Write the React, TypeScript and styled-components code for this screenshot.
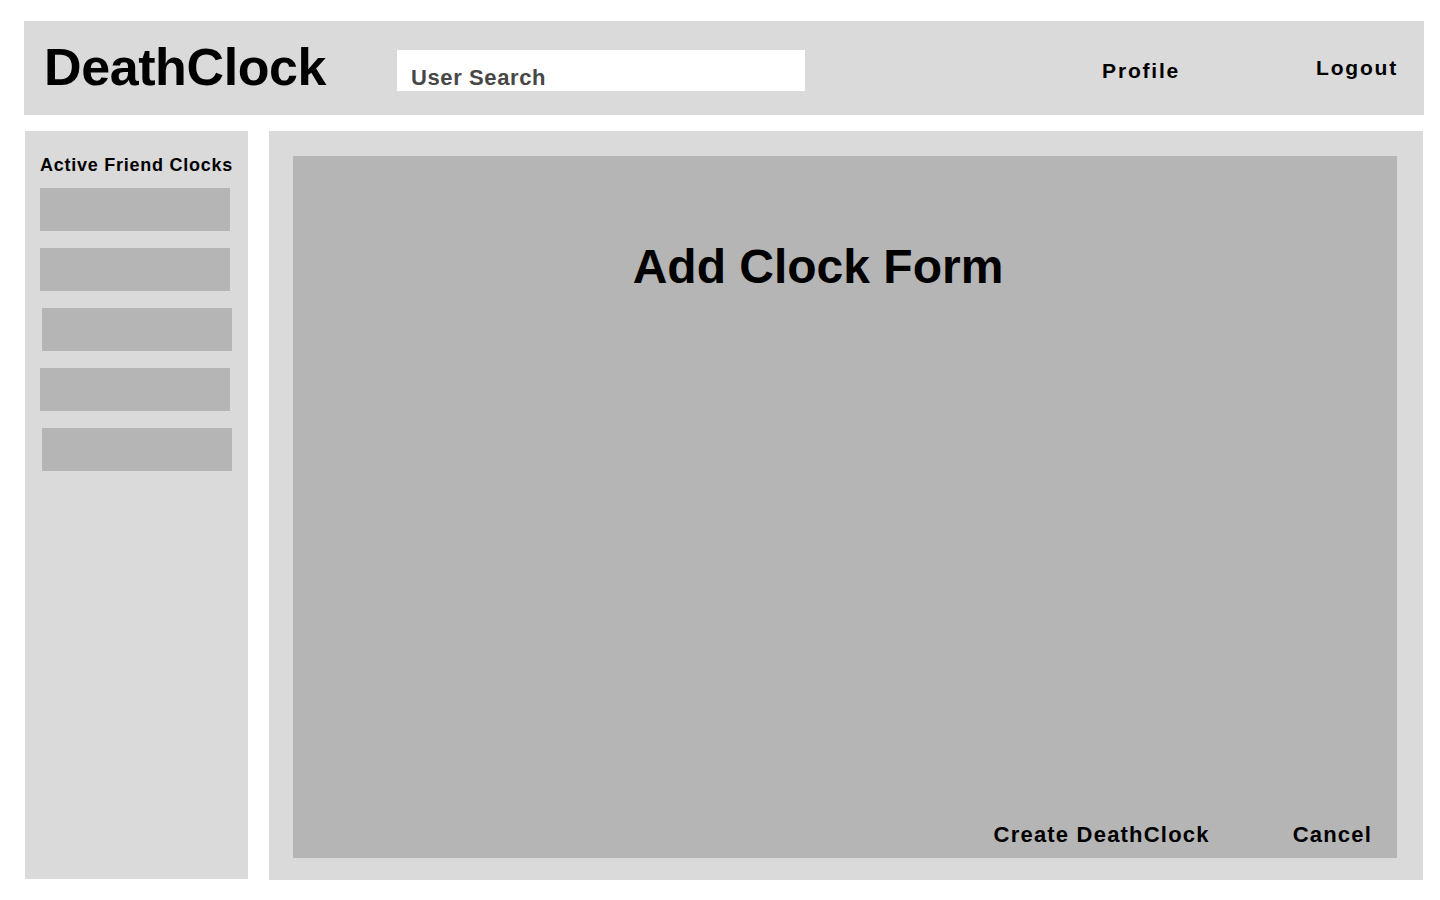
import styled, { createGlobalStyle } from "styled-components";

const GlobalStyle = createGlobalStyle`
  html, body {
    margin: 0;
    padding: 0;
    background: #ffffff;
  }
  body {
    font-family: "Liberation Sans", Arial, sans-serif;
    color: #000;
  }
`;

const Page = styled.div`
  width: 1440px;
  height: 900px;
  padding: 21px 0 0 24px;
  box-sizing: border-box;
`;

const Header = styled.header`
  width: 1400px;
  height: 94px;
  background: #dadada;
  display: flex;
  align-items: center;
  padding: 0 26px 0 20px;
  box-sizing: border-box;
`;

const Logo = styled.h1`
  margin: 0;
  font-size: 52px;
  font-weight: 700;
  letter-spacing: -0.4px;
  line-height: 1;
  width: 353px;
  position: relative;
  top: -1px;
`;

const Search = styled.div`
  width: 408px;
  height: 41px;
  background: #ffffff;
  box-sizing: border-box;
  padding: 17px 0 0 14px;
  font-size: 22px;
  font-weight: 700;
  color: #474747;
  letter-spacing: 0.6px;
  line-height: 1;
  position: relative;
  top: 2px;
`;

const NavLinks = styled.nav`
  margin-left: auto;
  display: flex;
  align-items: center;
  gap: 136px;
`;

const NavLink = styled.a<{ $drop?: number }>`
  font-size: 21px;
  font-weight: 700;
  letter-spacing: 1.8px;
  color: #000;
  text-decoration: none;
  position: relative;
  top: ${(p) => p.$drop ?? 0}px;
`;

const Body = styled.div`
  display: grid;
  grid-template-columns: 223px 1154px;
  column-gap: 21px;
  margin-top: 16px;
  padding-left: 1px;
`;

const Sidebar = styled.aside`
  height: 748px;
  background: #dadada;
  padding: 22px 0 0 15px;
  box-sizing: border-box;
`;

const SidebarTitle = styled.h2`
  margin: 0 0 11px;
  font-size: 18px;
  font-weight: 700;
  letter-spacing: 0.75px;
  line-height: 24px;
  white-space: nowrap;
`;

const ClockList = styled.div`
  display: flex;
  flex-direction: column;
  gap: 17px;
`;

const ClockItem = styled.div<{ $shift?: boolean }>`
  width: 190px;
  height: 43px;
  background: #b5b5b5;
  margin-left: ${(p) => (p.$shift ? 2 : 0)}px;
`;

const Main = styled.main`
  height: 749px;
  background: #dadada;
  padding: 25px 26px 22px 24px;
  box-sizing: border-box;
`;

const FormPanel = styled.section`
  height: 100%;
  background: #b5b5b5;
  display: flex;
  flex-direction: column;
`;

const FormTitle = styled.h2`
  margin: 85px 0 0;
  padding-right: 54px;
  text-align: center;
  font-size: 48px;
  font-weight: 700;
  letter-spacing: 0;
  line-height: 52px;
`;

const Actions = styled.div`
  margin-top: auto;
  display: flex;
  justify-content: flex-end;
  gap: 83px;
  padding: 0 25px 8px 0;
`;

const ActionButton = styled.button`
  background: none;
  border: none;
  padding: 0;
  font-family: inherit;
  font-size: 22px;
  font-weight: 700;
  letter-spacing: 1.2px;
  color: #000;
  line-height: 30px;
  cursor: pointer;
`;

export default function App() {
  return (
    <>
      <GlobalStyle />
      <Page>
        <Header>
          <Logo>DeathClock</Logo>
          <Search>User Search</Search>
          <NavLinks>
            <NavLink href="#" $drop={3}>
              Profile
            </NavLink>
            <NavLink href="#" $drop={0}>
              Logout
            </NavLink>
          </NavLinks>
        </Header>
        <Body>
          <Sidebar>
            <SidebarTitle>Active Friend Clocks</SidebarTitle>
            <ClockList>
              <ClockItem />
              <ClockItem />
              <ClockItem $shift />
              <ClockItem />
              <ClockItem $shift />
            </ClockList>
          </Sidebar>
          <Main>
            <FormPanel>
              <FormTitle>Add Clock Form</FormTitle>
              <Actions>
                <ActionButton>Create DeathClock</ActionButton>
                <ActionButton>Cancel</ActionButton>
              </Actions>
            </FormPanel>
          </Main>
        </Body>
      </Page>
    </>
  );
}
